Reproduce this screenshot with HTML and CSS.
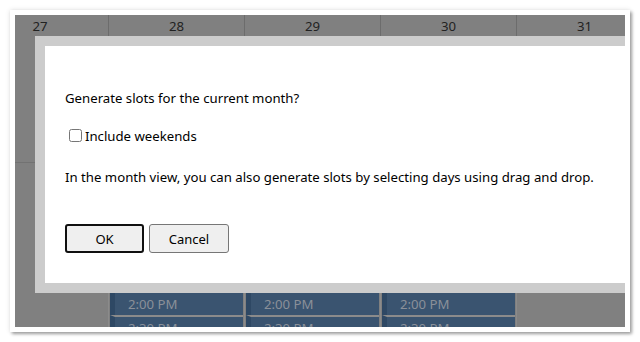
FILE: index.html
```html
<!DOCTYPE html>
<html>
<head>
<meta charset="utf-8">
<link rel="stylesheet" href="styles.css">
</head>
<body>
<div class="frame">
  <div class="viewport">
    <div class="cal">
      <div class="cal-head">
        <div class="hcell first">27</div>
        <div class="hcell">28</div>
        <div class="hcell">29</div>
        <div class="hcell">30</div>
        <div class="hcell">31</div>
      </div>
      <div class="cal-body">
        <div class="bcol first"><div class="hour-line"></div></div>
        <div class="bcol slots">
          <div class="slot">2:00 PM</div>
          <div class="slot">2:30 PM</div>
        </div>
        <div class="bcol slots">
          <div class="slot">2:00 PM</div>
          <div class="slot">2:30 PM</div>
        </div>
        <div class="bcol slots">
          <div class="slot">2:00 PM</div>
          <div class="slot">2:30 PM</div>
        </div>
        <div class="bcol"></div>
      </div>
    </div>
    <div class="modal">
      <div class="modal-inner">
        <p class="q">Generate slots for the current month?</p>
        <label class="chk"><input type="checkbox">Include weekends</label>
        <p class="hint">In the month view, you can also generate slots by selecting days using drag and drop.</p>
        <div class="buttons">
          <button class="btn ok">OK</button>
          <button class="btn">Cancel</button>
        </div>
      </div>
    </div>
  </div>
</div>
</body>
</html>
```
FILE: styles.css
```css
html, body {
  margin: 0;
  padding: 0;
  background: #ffffff;
}
body {
  font-family: "Noto Sans", "Open Sans", sans-serif;
  font-size: 13.2px;
}
.frame {
  margin: 10px;
  width: 610px;
  height: 312px;
  border: 5px solid #ffffff;
  box-shadow: 2px 2px 3px rgba(0,0,0,0.35), 0 0 5px rgba(0,0,0,0.12);
}
.viewport {
  position: relative;
  width: 610px;
  height: 312px;
  overflow: hidden;
  background: #808080;
}
.cal {
  margin-left: -43px;
  width: 700px;
}
.cal-head {
  display: flex;
  height: 21px;
}
.hcell {
  width: 136px;
  flex: none;
  box-sizing: border-box;
  border-left: 1px solid #6c6c6c;
  text-align: center;
  line-height: 22px;
  color: #222222;
}
.hcell.first {
  border-left: none;
}
.cal-body {
  display: flex;
  height: 291px;
}
.bcol {
  width: 136px;
  flex: none;
  box-sizing: border-box;
}
.bcol.first .hour-line {
  margin-left: 43px;
  margin-top: 126px;
  height: 1px;
  background: #727272;
}
.bcol.slots {
  padding: 257px 1px 0 1px;
  border-left: 1px solid #8b8b8b;
  display: flex;
  flex-direction: column;
}
.bcol.slots + .bcol {
  border-left: 1px solid #8b8b8b;
}
.slot {
  height: 22px;
  background: #3a5470;
  border-left: 5px solid #2e4864;
  color: #8a9099;
  padding-left: 13px;
  line-height: 22px;
  flex: none;
}
.slot + .slot {
  border-top: 2px solid #8b8b8b;
}
.modal {
  position: absolute;
  left: 20px;
  top: 21px;
  width: 640px;
  border: 10px solid #cccccc;
  background: #ffffff;
}
.modal-inner {
  height: 237px;
  padding: 0 20px;
  box-sizing: border-box;
  display: flex;
  flex-direction: column;
  align-items: flex-start;
  color: #000000;
}
.q {
  margin: 43px 0 0;
  line-height: 18px;
}
.chk {
  margin-top: 19px;
  display: flex;
  align-items: center;
  line-height: 18px;
}
.chk input {
  margin: 3px 3px 3px 4px;
  width: 13px;
  height: 13px;
}
.hint {
  margin: 23px 0 0;
  line-height: 18px;
}
.buttons {
  margin-top: 38px;
  display: flex;
  gap: 5px;
}
.btn {
  font-family: inherit;
  font-size: 13px;
  height: 29px;
  width: 80px;
  background: #efefef;
  border: 1px solid #767676;
  border-radius: 3px;
  color: #000000;
  padding: 0;
}
.btn.ok {
  width: 79px;
  border: 2px solid #101010;
}
```
